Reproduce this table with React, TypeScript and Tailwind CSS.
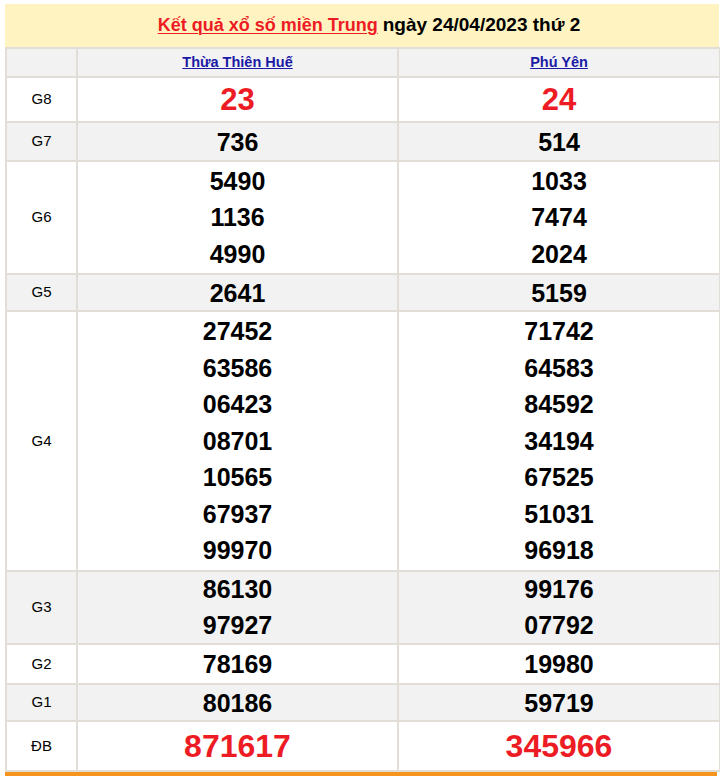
type Row = { label: string; a: string[]; b: string[]; h: number; gray: boolean; lead: string; red?: boolean; big?: boolean };

const rows: Row[] = [
  { label: "G8", a: ["23"], b: ["24"], h: 45, gray: false, lead: "leading-[36px]", red: true },
  { label: "G7", a: ["736"], b: ["514"], h: 39, gray: true, lead: "leading-[30px]" },
  { label: "G6", a: ["5490", "1136", "4990"], b: ["1033", "7474", "2024"], h: 113, gray: false, lead: "leading-[36.5px]" },
  { label: "G5", a: ["2641"], b: ["5159"], h: 37, gray: true, lead: "leading-[30px]" },
  {
    label: "G4",
    a: ["27452", "63586", "06423", "08701", "10565", "67937", "99970"],
    b: ["71742", "64583", "84592", "34194", "67525", "51031", "96918"],
    h: 260,
    gray: false,
    lead: "leading-[36.6px]",
  },
  { label: "G3", a: ["86130", "97927"], b: ["99176", "07792"], h: 73, gray: true, lead: "leading-[35.5px]" },
  { label: "G2", a: ["78169"], b: ["19980"], h: 40, gray: false, lead: "leading-[30px]" },
  { label: "G1", a: ["80186"], b: ["59719"], h: 37, gray: true, lead: "leading-[30px]" },
  { label: "ĐB", a: ["871617"], b: ["345966"], h: 50, gray: false, lead: "leading-[40px]", red: true, big: true },
];

function Cell({ nums, row }: { nums: string[]; row: Row }) {
  return (
    <div className="flex flex-col items-center justify-center">
      {nums.map((n, i) => (
        <span
          key={i}
          className={`font-bold ${row.lead} ${
            row.red ? `text-[#ed1c24] ${row.big ? "text-[32px]" : "text-[31px]"}` : "text-[25px] text-black"
          }`}
        >
          {n}
        </span>
      ))}
    </div>
  );
}

export default function App() {
  return (
    <div className="min-h-[776px] bg-white pt-[4px] pl-[5px] pr-[1px] font-['Liberation_Sans',Arial,sans-serif]">
      <div className="flex h-[43px] items-center justify-center bg-[#fff4c1] pl-[14px] font-bold">
        <a className="text-[18px] text-[#ed1c24] underline decoration-1 underline-offset-2">Kết quả xổ số miền Trung</a>
        <span className="ml-[5px] text-[19px] text-black">ngày 24/04/2023 thứ 2</span>
      </div>
      <table className="w-[714px] table-fixed border-collapse">
        <colgroup>
          <col className="w-[71px]" />
          <col className="w-[321px]" />
          <col className="w-[322px]" />
        </colgroup>
        <thead>
          <tr className="h-[29px] bg-[#f2f2f2]">
            <th className="border-2 border-[#e2ddd6]" />
            <th className="border-2 border-[#e2ddd6] text-[14.5px] font-bold">
              <a className="text-[#1a1aa6] underline">Thừa Thiên Huế</a>
            </th>
            <th className="border-2 border-[#e2ddd6] text-[14.5px] font-bold">
              <a className="text-[#1a1aa6] underline">Phú Yên</a>
            </th>
          </tr>
        </thead>
        <tbody>
          {rows.map((r) => (
            <tr key={r.label} className={r.gray ? "bg-[#f2f2f2]" : "bg-white"} style={{ height: r.h }}>
              <td className="border-2 border-[#e2ddd6] p-0 text-center text-[15px] text-black">{r.label}</td>
              <td className="border-2 border-[#e2ddd6] p-0">
                <Cell nums={r.a} row={r} />
              </td>
              <td className="border-2 border-[#e2ddd6] p-0">
                <Cell nums={r.b} row={r} />
              </td>
            </tr>
          ))}
        </tbody>
      </table>
      <div className="h-[5px] w-[712px] bg-[#f7941d]" />
    </div>
  );
}
